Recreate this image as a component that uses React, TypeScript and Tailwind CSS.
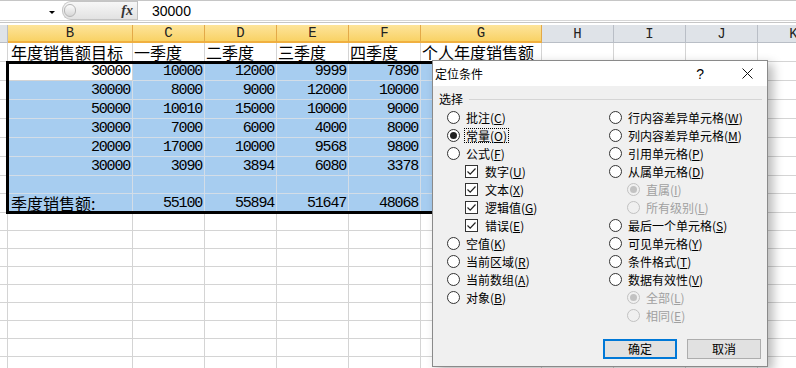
import clsx from 'clsx'

const CJK = "font-['Noto_Sans_CJK_SC',sans-serif]"
const MONO = "font-['Liberation_Mono','Noto_Sans_CJK_SC',monospace]"

const COLS = [
  { key: 'B', w: 'w-[125px]', hl: true },
  { key: 'C', w: 'w-[72px]', hl: true },
  { key: 'D', w: 'w-[72px]', hl: true },
  { key: 'E', w: 'w-[72px]', hl: true },
  { key: 'F', w: 'w-[72px]', hl: true },
  { key: 'G', w: 'w-[121px]', hl: true },
  { key: 'H', w: 'w-[72px]', hl: false },
  { key: 'I', w: 'w-[72px]', hl: false },
  { key: 'J', w: 'w-[72px]', hl: false },
  { key: 'K', w: 'w-[72px]', hl: false },
]

type Row = { h: string; cells: (string | number)[]; selected?: boolean }

const ROWS: Row[] = [
  { h: 'h-[19px]', cells: ['年度销售额目标', '一季度', '二季度', '三季度', '四季度', '个人年度销售额'] },
  { h: 'h-[19px]', cells: [30000, 10000, 12000, 9999, 7890], selected: true },
  { h: 'h-[19px]', cells: [30000, 8000, 9000, 12000, 10000], selected: true },
  { h: 'h-[19px]', cells: [50000, 10010, 15000, 10000, 9000], selected: true },
  { h: 'h-[19px]', cells: [30000, 7000, 6000, 4000, 8000], selected: true },
  { h: 'h-[19px]', cells: [20000, 17000, 10000, 9568, 9800], selected: true },
  { h: 'h-[19px]', cells: [30000, 3090, 3894, 6080, 3378], selected: true },
  { h: 'h-[18px]', cells: [], selected: true },
  { h: 'h-[19px]', cells: ['季度销售额:', 55100, 55894, 51647, 48068], selected: true },
  ...Array.from({ length: 9 }, () => ({ h: 'h-[18px]', cells: [] })),
]

function FormulaBar() {
  return (
    <div className="h-[23px] border-y border-[#c6c6c6]">
      <div className="flex h-[20px] border-b border-[#d6d6d6]">
        <div className="relative w-[62px]">
          <span className="absolute left-[49px] top-[10px] h-0 w-0 border-x-[3px] border-t-[3px] border-x-transparent border-t-black" />
        </div>
        <div className="flex w-[75px] items-center justify-between rounded-l-[9px] border border-r-0 border-[#c4c4c4] bg-gradient-to-b from-[#f7f7f7] to-[#e2e2e2] pl-[1px] pr-[4px]">
          <span className="h-[13px] w-[12px] rounded-full border border-[#b5b5b5] bg-gradient-to-b from-[#fdfdfd] to-[#d6d6d6]" />
          <span className="font-['Liberation_Serif',serif] text-[14px] font-bold italic leading-none text-[#333]">fx</span>
        </div>
        <div className="flex flex-1 items-center border-l border-[#c0c0c0] pl-[14px] font-['Liberation_Sans',sans-serif] text-[14px] leading-none text-black">
          30000
        </div>
      </div>
    </div>
  )
}

function HeaderRow() {
  return (
    <div className="flex h-[18px]">
      <div className="w-[8px] shrink-0 border-r border-b border-[#b9bec6] bg-[#dfe3e8]" />
      {COLS.map((c) => (
        <div
          key={c.key}
          className={clsx(
            c.w,
            'flex shrink-0 items-center justify-center border-r',
            MONO,
            'text-[14px] leading-none text-[#222]',
            c.hl
              ? 'border-b-2 border-r-[#e3a948] border-b-[#f0b040] bg-gradient-to-b from-[#fde49a] to-[#f9d264]'
              : 'border-b border-[#b9bec6] bg-[#dfe3e8]',
          )}
        >
          {c.key}
        </div>
      ))}
    </div>
  )
}

function Cell({ value, col, row, selected, active }: { value?: string | number; col: (typeof COLS)[number]; row: number; selected: boolean; active: boolean }) {
  const isNum = typeof value === 'number'
  return (
    <div
      className={clsx(
        col.w,
        'flex shrink-0 items-center overflow-visible whitespace-nowrap border-r border-b',
        selected && !active ? 'border-[#d3dde7] bg-[#a7cdf0]' : 'border-[#d4d4d4] bg-white',
        isNum ? 'justify-end pr-[2px]' : row === 0 && col.key !== 'B' ? 'pl-[1px]' : 'pl-[3px]',
      )}
    >
      {value !== undefined &&
        (isNum ? (
          <span className={clsx(MONO, 'text-[15px] leading-none tracking-[-1.2px] text-black')}>{value}</span>
        ) : (
          <span className={clsx(CJK, 'text-[16px] leading-none text-black')}>{value}</span>
        ))}
    </div>
  )
}

function Sheet() {
  return (
    <div className="flex flex-col">
      {ROWS.map((r, ri) => (
        <div key={ri} className={clsx('flex', r.h)}>
          <div className="w-[8px] shrink-0 border-r border-b border-[#d4d4d4] bg-white" />
          {COLS.map((c, ci) => (
            <Cell
              key={c.key}
              value={r.cells[ci]}
              col={c}
              row={ri}
              selected={!!r.selected && c.hl}
              active={ri === 1 && ci === 0}
            />
          ))}
        </div>
      ))}
    </div>
  )
}

type Item = { text: string; key: string; kind?: 'radio' | 'check'; checked?: boolean; disabled?: boolean; indent?: boolean; focus?: boolean }

const LEFT: Item[] = [
  { text: '批注', key: 'C' },
  { text: '常量', key: 'O', checked: true, focus: true },
  { text: '公式', key: 'F' },
  { text: '数字', key: 'U', kind: 'check', checked: true, indent: true },
  { text: '文本', key: 'X', kind: 'check', checked: true, indent: true },
  { text: '逻辑值', key: 'G', kind: 'check', checked: true, indent: true },
  { text: '错误', key: 'E', kind: 'check', checked: true, indent: true },
  { text: '空值', key: 'K' },
  { text: '当前区域', key: 'R' },
  { text: '当前数组', key: 'A' },
  { text: '对象', key: 'B' },
]

const RIGHT: Item[] = [
  { text: '行内容差异单元格', key: 'W' },
  { text: '列内容差异单元格', key: 'M' },
  { text: '引用单元格', key: 'P' },
  { text: '从属单元格', key: 'D' },
  { text: '直属', key: 'I', checked: true, disabled: true, indent: true },
  { text: '所有级别', key: 'L', disabled: true, indent: true },
  { text: '最后一个单元格', key: 'S' },
  { text: '可见单元格', key: 'Y' },
  { text: '条件格式', key: 'T' },
  { text: '数据有效性', key: 'V' },
  { text: '全部', key: 'L', checked: true, disabled: true, indent: true },
  { text: '相同', key: 'E', disabled: true, indent: true },
]

function Radio({ checked, disabled }: { checked?: boolean; disabled?: boolean }) {
  return (
    <span
      className={clsx(
        'flex h-[13px] w-[13px] shrink-0 items-center justify-center rounded-full border',
        disabled ? 'border-[#c2c2c2] bg-[#f0f0f0]' : 'border-[#333] bg-white',
      )}
    >
      {checked && <span className={clsx('h-[7px] w-[7px] rounded-full', disabled ? 'bg-[#c2c2c2]' : 'bg-[#222]')} />}
    </span>
  )
}

function Check({ checked }: { checked?: boolean }) {
  return (
    <span className="flex h-[13px] w-[13px] shrink-0 items-center justify-center border border-[#333] bg-white">
      {checked && (
        <svg width="11" height="11" viewBox="0 0 11 11">
          <path d="M1.5 5.5 L4.2 8.2 L9.5 2.5" fill="none" stroke="#222" strokeWidth="1.2" />
        </svg>
      )}
    </span>
  )
}

function Option({ item }: { item: Item }) {
  const check = item.kind === 'check'
  return (
    <div className={clsx('flex h-[18px] items-center', item.indent && 'pl-[18px]', check ? 'gap-[5px]' : 'gap-[4px]')}>
      {check ? <Check checked={item.checked} /> : <Radio checked={item.checked} disabled={item.disabled} />}
      <span
        className={clsx(
          'whitespace-nowrap px-[1px] text-[12px] leading-[13px]',
          item.disabled ? 'text-[#a0a0a0]' : 'text-black',
          item.focus ? 'border border-dotted border-black' : 'border border-transparent',
        )}
      >
        {item.text}(<span className="underline">{item.key}</span>)
      </span>
    </div>
  )
}

function GotoDialog() {
  return (
    <div className={clsx('absolute left-[432px] top-[60px] flex h-[307px] w-[336px] flex-col border border-[#8a8a8a] bg-[#f0f0f0] shadow-[5px_4px_10px_rgba(0,0,0,0.28)]', CJK)}>
      <div className="flex h-[25px] items-center bg-white pl-[2px] pr-[14px]">
        <span className="text-[12px] text-black">定位条件</span>
        <span className="ml-auto font-['Liberation_Sans',sans-serif] text-[14px] leading-none text-black">?</span>
        <svg className="ml-[38px]" width="11" height="11" viewBox="0 0 11 11">
          <path d="M0.5 0.5 L10.5 10.5 M10.5 0.5 L0.5 10.5" stroke="#111" strokeWidth="1" />
        </svg>
      </div>
      <div className="flex flex-1 flex-col pl-[6px] pr-[5px] pt-[6px]">
        <div className="flex h-[14px] items-center gap-[6px]">
          <span className="text-[12px] leading-none text-black">选择</span>
          <span className="h-px flex-1 border-t border-[#d5d5d5]" />
        </div>
        <div className="mt-[2px] grid grid-cols-[162px_1fr] pl-[8px]">
          <div className="flex flex-col">
            {LEFT.map((it) => (
              <Option key={it.text} item={it} />
            ))}
          </div>
          <div className="flex flex-col">
            {RIGHT.map((it) => (
              <Option key={it.text} item={it} />
            ))}
          </div>
        </div>
        <div className="mt-[15px] flex justify-end gap-[10px] pr-[1px]">
          <button className="flex h-[20px] w-[74px] items-center justify-center border-2 border-[#0078d7] bg-[#e1e1e1] text-[12px] text-black">
            确定
          </button>
          <button className="flex h-[20px] w-[74px] items-center justify-center border border-[#adadad] bg-[#e1e1e1] text-[12px] text-black">
            取消
          </button>
        </div>
      </div>
    </div>
  )
}

export default function App() {
  return (
    <div className="relative h-[368px] w-[796px] overflow-hidden bg-white">
      <FormulaBar />
      <div className="h-[2px]" />
      <HeaderRow />
      <Sheet />
      {/* selection outline */}
      <div className="pointer-events-none absolute left-[6px] top-[61px] h-[153px] w-[538px] border-[3px] border-black" />
      <GotoDialog />
    </div>
  )
}
